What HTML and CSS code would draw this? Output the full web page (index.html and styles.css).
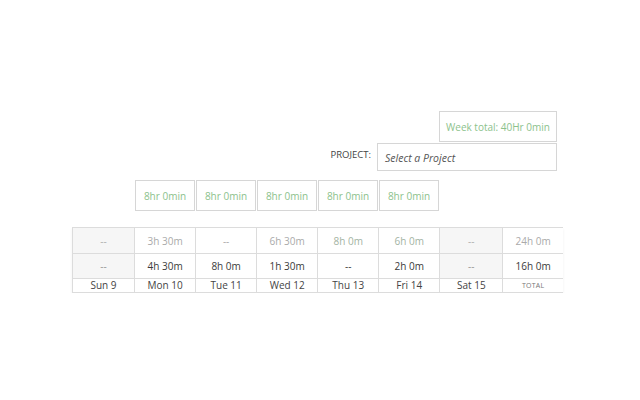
FILE: index.html
```html
<!DOCTYPE html>
<html>
<head>
<meta charset="utf-8">
<link rel="stylesheet" href="styles.css">
</head>
<body>
<div class="wrap">
  <div class="total-row">
    <div class="week-total">Week total: 40Hr 0min</div>
  </div>
  <div class="project-row">
    <span class="project-label">PROJECT:</span>
    <div class="project-select">Select a Project</div>
  </div>
  <div class="hours-row">
    <div class="hour-box">8hr 0min</div>
    <div class="hour-box">8hr 0min</div>
    <div class="hour-box">8hr 0min</div>
    <div class="hour-box">8hr 0min</div>
    <div class="hour-box">8hr 0min</div>
  </div>
  <table class="week">
    <colgroup>
      <col class="c62"><col class="c61"><col class="c61"><col class="c61"><col class="c61"><col class="c61"><col class="c63"><col class="c60">
    </colgroup>
    <tr class="r1">
      <td class="off">--</td><td>3h 30m</td><td>--</td><td>6h 30m</td><td class="gr">8h 0m</td><td class="gr">6h 0m</td><td class="off">--</td><td>24h 0m</td>
    </tr>
    <tr class="r2">
      <td class="off">--</td><td>4h 30m</td><td>8h 0m</td><td>1h 30m</td><td>--</td><td>2h 0m</td><td class="off">--</td><td>16h 0m</td>
    </tr>
    <tr class="r3">
      <td>Sun 9</td><td>Mon 10</td><td>Tue 11</td><td>Wed 12</td><td>Thu 13</td><td>Fri 14</td><td>Sat 15</td><td class="total">TOTAL</td>
    </tr>
  </table>
</div>
</body>
</html>
```
FILE: styles.css
```css
html, body {
  margin: 0;
  padding: 0;
  background: #fff;
  font-family: "Open Sans", "DejaVu Sans", sans-serif;
  font-size: 10px;
  color: #333;
}
.wrap {
  margin-left: 72px;
  width: 491px;
  padding-top: 111px;
  display: flex;
  flex-direction: column;
}
.total-row {
  display: flex;
  justify-content: flex-end;
  padding-right: 6px;
}
.week-total {
  box-sizing: border-box;
  width: 118px;
  height: 31px;
  border: 1px solid #d6d6d6;
  color: #8cc28c;
  display: flex;
  align-items: center;
  justify-content: center;
  font-size: 10px;
}
.project-row {
  display: flex;
  justify-content: flex-end;
  align-items: center;
  padding-right: 6px;
  margin-top: 1px;
}
.project-label {
  font-size: 9.5px;
  color: #444;
  margin-right: 6px;
  margin-top: -5px;
}
.project-select {
  box-sizing: border-box;
  width: 180px;
  height: 28px;
  border: 1px solid #d6d6d6;
  font-style: italic;
  color: #555;
  font-size: 10.5px;
  display: flex;
  align-items: center;
  padding-left: 7px;
  padding-top: 1px;
}
.hours-row {
  display: flex;
  gap: 1px;
  margin-left: 63px;
  margin-top: 9px;
}
.hour-box {
  box-sizing: border-box;
  width: 60px;
  height: 31px;
  border: 1px solid #d6d6d6;
  color: #8cc28c;
  display: flex;
  align-items: center;
  justify-content: center;
  font-size: 10px;
}
.week {
  margin-top: 16px;
  border-collapse: collapse;
  table-layout: fixed;
  width: 491px;
  box-shadow: 0 2px 3px rgba(0,0,0,0.06);
}
.c62 { width: 62px; }
.c61 { width: 61px; }
.c63 { width: 63px; }
.c60 { width: 60px; }
.week td {
  border: 1px solid #dcdcdc;
  text-align: center;
  padding: 0;
  font-size: 10px;
  white-space: nowrap;
}
.week td:last-child {
  border-right: none;
}
.r1 td {
  height: 25px;
  color: #aaa;
}
.r1 td.gr {
  color: #a3b3a3;
}
.r2 td {
  height: 24px;
  color: #3a3a3a;
}
.r3 td {
  height: 13px;
  line-height: 13px;
  color: #444;
}
.week td.off {
  background: #f6f6f6;
}
.r1 td.off {
  color: #b0b0b0;
}
.r2 td.off {
  color: #999;
}
.week td.total {
  font-size: 7px;
  color: #777;
  letter-spacing: 0.2px;
}
```
